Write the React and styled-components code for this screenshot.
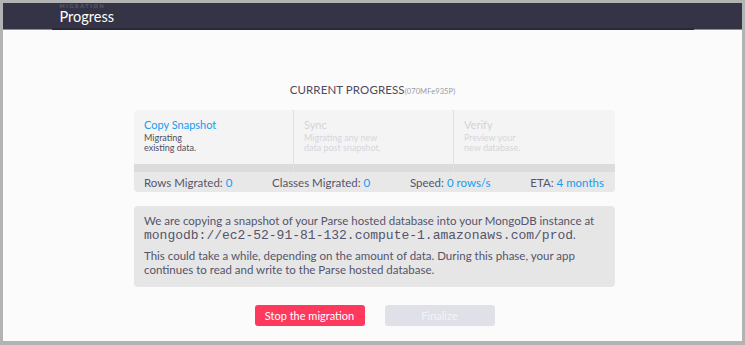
import React from 'react'
import styled, { createGlobalStyle } from 'styled-components'

const GlobalStyle = createGlobalStyle`
  html, body {
    margin: 0;
    padding: 0;
  }
  body {
    font-family: Lato, "Open Sans", sans-serif;
    background: #b3b3b3;
  }
`

const Frame = styled.div`
  width: 745px;
  height: 345px;
  box-sizing: border-box;
  padding: 3px 3px 4px 3px;
  background: #b3b3b3;
  display: flex;
  flex-direction: column;
`

const Header = styled.header`
  height: 26px;
  background: #353446;
  border-bottom: 1px solid #8c8b99;
  display: flex;
  justify-content: center;
`

const HeaderInner = styled.div`
  width: 642px;
  box-sizing: border-box;
  padding-left: 8px;
  border-bottom: 2px solid #2a2938;
  margin-bottom: -1px;
  display: flex;
  flex-direction: column;
`

const Section = styled.div`
  font-size: 5.5px;
  letter-spacing: 1.6px;
  color: #5d5c70;
  line-height: 7px;
  font-weight: 700;
`

const PageTitle = styled.h1`
  margin: 0;
  font-size: 14.5px;
  font-weight: 400;
  color: #ffffff;
  line-height: 13px;
`

const Content = styled.main`
  flex: 1;
  background: #fcfbfc;
  display: flex;
  flex-direction: column;
  align-items: center;
  padding-top: 52px;
  padding-left: 4px;
`

const Title = styled.div`
  font-size: 11.5px;
  color: #4b4a5e;
  letter-spacing: 0.1px;
  line-height: 16px;
  margin-left: -4px;
`

const AppId = styled.span`
  font-size: 7.5px;
  color: #9a99a8;
`

const Card = styled.div`
  width: 481px;
  margin-top: 10px;
  border-radius: 4px;
  overflow: hidden;
  background: #f4f4f5;
`

const Steps = styled.div`
  display: grid;
  grid-template-columns: 159px 160px 162px;
`

const Step = styled.div`
  height: 62px;
  box-sizing: border-box;
  padding: 8px 10px 0;
  border-left: ${p => (p.$first ? 'none' : '1px solid #e2e2e4')};
  display: flex;
  flex-direction: column;
  position: relative;
  &::after {
    content: '';
    position: absolute;
    left: 0;
    right: 0;
    bottom: 0;
    height: 8px;
    background: #dcdcdd;
  }
`

const StepName = styled.div`
  font-size: 11px;
  line-height: 14px;
  color: ${p => (p.$active ? '#169cee' : '#d3d3d7')};
`

const StepDesc = styled.div`
  font-size: 9px;
  line-height: 10px;
  margin-top: 1px;
  color: ${p => (p.$active ? '#4f4e60' : '#d6d6da')};
`

const Stats = styled.div`
  height: 20px;
  background: #e8e8e9;
  display: flex;
  align-items: center;
  justify-content: space-between;
  padding: 0 11px 0 10px;
  font-size: 11.5px;
  color: #55546a;
`

const Value = styled.span`
  color: #169cee;
`

const Info = styled.div`
  width: 481px;
  box-sizing: border-box;
  margin-top: 14px;
  padding: 8px 10px 10px;
  background: #e6e6e7;
  border-radius: 4px;
  color: #55546a;
  font-size: 11.5px;
  line-height: 14px;
`

const Para = styled.p`
  margin: 0 0 6px;
  &:last-child {
    margin: 0;
  }
`

const Mono = styled.code`
  font-family: "Liberation Mono", "DejaVu Sans Mono", monospace;
  font-size: 13px;
  line-height: 14px;
`

const Actions = styled.div`
  display: flex;
  gap: 20px;
  margin-top: 18px;
`

const Button = styled.button`
  width: 110px;
  height: 21px;
  border: none;
  border-radius: 3px;
  font-family: Lato, "Open Sans", sans-serif;
  font-size: 11px;
  color: ${p => (p.$danger ? '#ffffff' : '#f4f4f8')};
  background: ${p => (p.$danger ? '#ff395e' : '#e0e0e8')};
  cursor: pointer;
`

const steps = [
  { name: 'Copy Snapshot', desc: ['Migrating', 'existing data.'], active: true },
  { name: 'Sync', desc: ['Migrating any new', 'data post snapshot.'] },
  { name: 'Verify', desc: ['Preview your', 'new database.'] }
]

export default function App() {
  return (
    <>
      <GlobalStyle />
      <Frame>
        <Header>
          <HeaderInner>
            <Section>MIGRATION</Section>
            <PageTitle>Progress</PageTitle>
          </HeaderInner>
        </Header>
        <Content>
          <Title>
            CURRENT PROGRESS<AppId>(070MFe935P)</AppId>
          </Title>
          <Card>
            <Steps>
              {steps.map((s, i) => (
                <Step key={s.name} $first={i === 0}>
                  <StepName $active={s.active}>{s.name}</StepName>
                  <StepDesc $active={s.active}>
                    {s.desc[0]}
                    <br />
                    {s.desc[1]}
                  </StepDesc>
                </Step>
              ))}
            </Steps>
            <Stats>
              <span>Rows Migrated: <Value>0</Value></span>
              <span>Classes Migrated: <Value>0</Value></span>
              <span>Speed: <Value>0 rows/s</Value></span>
              <span>ETA: <Value>4 months</Value></span>
            </Stats>
          </Card>
          <Info>
            <Para>
              We are copying a snapshot of your Parse hosted database into your MongoDB instance at{' '}
              <Mono>mongodb://ec2-52-91-81-132.compute-1.amazonaws.com/prod</Mono>.
            </Para>
            <Para>
              This could take a while, depending on the amount of data. During this phase, your app
              continues to read and write to the Parse hosted database.
            </Para>
          </Info>
          <Actions>
            <Button $danger>Stop the migration</Button>
            <Button disabled>Finalize</Button>
          </Actions>
        </Content>
      </Frame>
    </>
  )
}
